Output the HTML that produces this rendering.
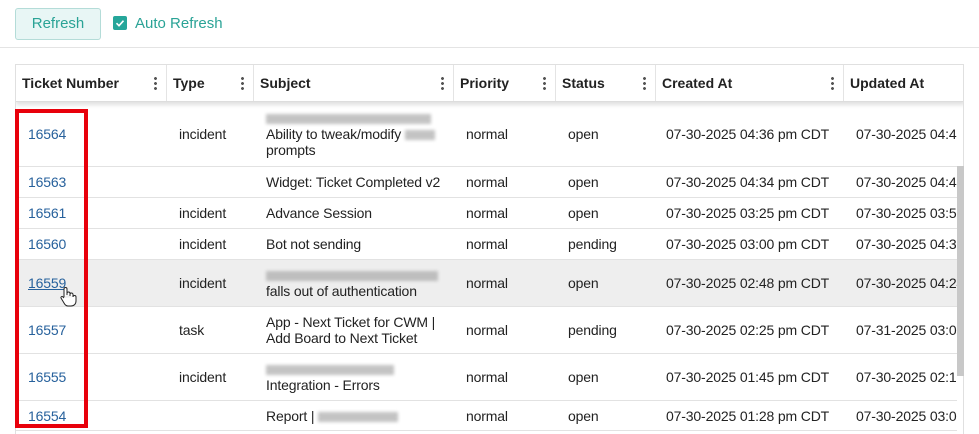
<!DOCTYPE html>
<html><head><style>
*{margin:0;padding:0;box-sizing:border-box}
body{width:979px;height:434px;overflow:hidden;background:#fff;font-family:"Liberation Sans",Arial,sans-serif;font-size:14px;color:#222;position:relative}
.abs{position:absolute}
.btn{left:15px;top:8px;width:86px;height:32px;background:#e8f6f5;border:1px solid #b4dcd8;border-radius:3px;color:#2aa396;font-size:15px;text-align:center;line-height:30px}
.cb{left:113px;top:16px;width:14px;height:14px;background:#26a69a;border-radius:2px}
.al{left:135px;top:15px;color:#2aa396;font-size:15px}
.hr{left:0;top:47px;width:979px;height:1px;background:#e4e4e4}
.tbl{left:15px;top:64px;width:949px;height:370px;border:1px solid #e0e0e0;border-bottom:none;overflow:hidden}
.hd{left:0;top:0;width:949px;height:37px;background:#fff;border-bottom:1px solid #ddd;box-shadow:0 3px 4px rgba(0,0,0,.12);z-index:2}
.hc{top:0;height:36px;line-height:36px;font-weight:bold;font-size:14px;padding-left:6px;border-right:1px solid #e4e4e4;white-space:nowrap}
.dots{position:absolute;right:9px;top:11px;width:3px;height:14px;background:radial-gradient(circle,#555 1.3px,transparent 1.6px) 0 0/3px 5px repeat-y}
.row{left:0;width:949px;border-bottom:1px solid #e2e2e2}
.c{position:absolute;top:50%;transform:translateY(-50%);line-height:16px;font-size:14px;white-space:nowrap;letter-spacing:-0.15px}
.lnk{color:#27619c}
.blur{display:inline-block;height:10px;background:#aaa;filter:blur(1.5px);opacity:.7;vertical-align:middle}
.red{left:15px;top:109px;width:73px;height:319px;border:4px solid #e8000b;z-index:5}
.sb{left:957px;top:166px;width:7px;height:210px;background:#c8c8c8;z-index:3}
</style></head><body>
<div class="abs btn">Refresh</div>
<div class="abs cb"><svg width="14" height="14"><path d="M3.5 7.2l2.5 2.5 4.5-5" stroke="#fff" stroke-width="1.6" fill="none"/></svg></div>
<div class="abs al">Auto Refresh</div>
<div class="abs hr"></div>
<div class="abs tbl">
 <div class="abs hd">
  <div class="abs hc" style="left:0;width:151px">Ticket Number<span class="dots"></span></div>
  <div class="abs hc" style="left:151px;width:87px">Type<span class="dots"></span></div>
  <div class="abs hc" style="left:238px;width:200px">Subject<span class="dots"></span></div>
  <div class="abs hc" style="left:438px;width:102px">Priority<span class="dots"></span></div>
  <div class="abs hc" style="left:540px;width:100px">Status<span class="dots"></span></div>
  <div class="abs hc" style="left:640px;width:188px">Created At<span class="dots"></span></div>
  <div class="abs hc" style="left:828px;width:130px;border:none">Updated At</div>
 </div>
</div>
<div class="abs" style="left:16px;top:102px;width:941px;height:332px;overflow:hidden">
<div class="abs row" style="top:0;height:65px"><span class="c lnk" style="left:12px">16564</span><span class="c" style="left:163px">incident</span><span class="c" style="left:250px"><span class="blur" style="width:165px"></span><br>Ability to tweak/modify <span class="blur" style="width:30px"></span><br>prompts</span><span class="c" style="left:450px">normal</span><span class="c" style="left:552px">open</span><span class="c" style="left:650px">07-30-2025 04:36 pm CDT</span><span class="c" style="left:840px">07-30-2025 04:43 pm CDT</span></div>
<div class="abs row" style="top:65px;height:31px"><span class="c lnk" style="left:12px">16563</span><span class="c" style="left:250px">Widget: Ticket Completed v2</span><span class="c" style="left:450px">normal</span><span class="c" style="left:552px">open</span><span class="c" style="left:650px">07-30-2025 04:34 pm CDT</span><span class="c" style="left:840px">07-30-2025 04:48 pm CDT</span></div>
<div class="abs row" style="top:96px;height:31px"><span class="c lnk" style="left:12px">16561</span><span class="c" style="left:163px">incident</span><span class="c" style="left:250px">Advance Session</span><span class="c" style="left:450px">normal</span><span class="c" style="left:552px">open</span><span class="c" style="left:650px">07-30-2025 03:25 pm CDT</span><span class="c" style="left:840px">07-30-2025 03:55 pm CDT</span></div>
<div class="abs row" style="top:127px;height:31px"><span class="c lnk" style="left:12px">16560</span><span class="c" style="left:163px">incident</span><span class="c" style="left:250px">Bot not sending</span><span class="c" style="left:450px">normal</span><span class="c" style="left:552px">pending</span><span class="c" style="left:650px">07-30-2025 03:00 pm CDT</span><span class="c" style="left:840px">07-30-2025 04:35 pm CDT</span></div>
<div class="abs row" style="top:158px;height:47px;background:#eeeeee"><span class="c lnk" style="left:12px;text-decoration:underline">16559</span><span class="c" style="left:163px">incident</span><span class="c" style="left:250px"><span class="blur" style="width:172px"></span><br>falls out of authentication</span><span class="c" style="left:450px">normal</span><span class="c" style="left:552px">open</span><span class="c" style="left:650px">07-30-2025 02:48 pm CDT</span><span class="c" style="left:840px">07-30-2025 04:24 pm CDT</span>
<svg class="abs" style="left:43px;top:26px" width="18" height="22" viewBox="0 0 18 22"><path d="M5 11V3a1.5 1.5 0 013 0v6 M8 9V7.5a1.5 1.5 0 013 0V10 M11 10V8.5a1.5 1.5 0 013 0V11 M14 11a1.5 1.5 0 013 0v4c0 3-2 5-5 5H9c-2 0-3-1-4-3L2 12c-.5-1 .8-2 1.8-1.2L5 12" fill="#fff" stroke="#222" stroke-width="1"/></svg></div>
<div class="abs row" style="top:205px;height:47px"><span class="c lnk" style="left:12px">16557</span><span class="c" style="left:163px">task</span><span class="c" style="left:250px">App - Next Ticket for CWM |<br>Add Board to Next Ticket</span><span class="c" style="left:450px">normal</span><span class="c" style="left:552px">pending</span><span class="c" style="left:650px">07-30-2025 02:25 pm CDT</span><span class="c" style="left:840px">07-31-2025 03:03 pm CDT</span></div>
<div class="abs row" style="top:252px;height:47px"><span class="c lnk" style="left:12px">16555</span><span class="c" style="left:163px">incident</span><span class="c" style="left:250px"><span class="blur" style="width:128px"></span><br>Integration - Errors</span><span class="c" style="left:450px">normal</span><span class="c" style="left:552px">open</span><span class="c" style="left:650px">07-30-2025 01:45 pm CDT</span><span class="c" style="left:840px">07-30-2025 02:13 pm CDT</span></div>
<div class="abs row" style="top:299px;height:30px"><span class="c lnk" style="left:12px">16554</span><span class="c" style="left:250px">Report | <span class="blur" style="width:80px"></span></span><span class="c" style="left:450px">normal</span><span class="c" style="left:552px">open</span><span class="c" style="left:650px">07-30-2025 01:28 pm CDT</span><span class="c" style="left:840px">07-30-2025 03:01 pm CDT</span></div>
</div>
<div class="abs" style="left:964px;top:64px;width:15px;height:370px;background:#fff;z-index:4"></div>
<div class="abs sb"></div>
<div class="abs red"></div>
</body></html>
